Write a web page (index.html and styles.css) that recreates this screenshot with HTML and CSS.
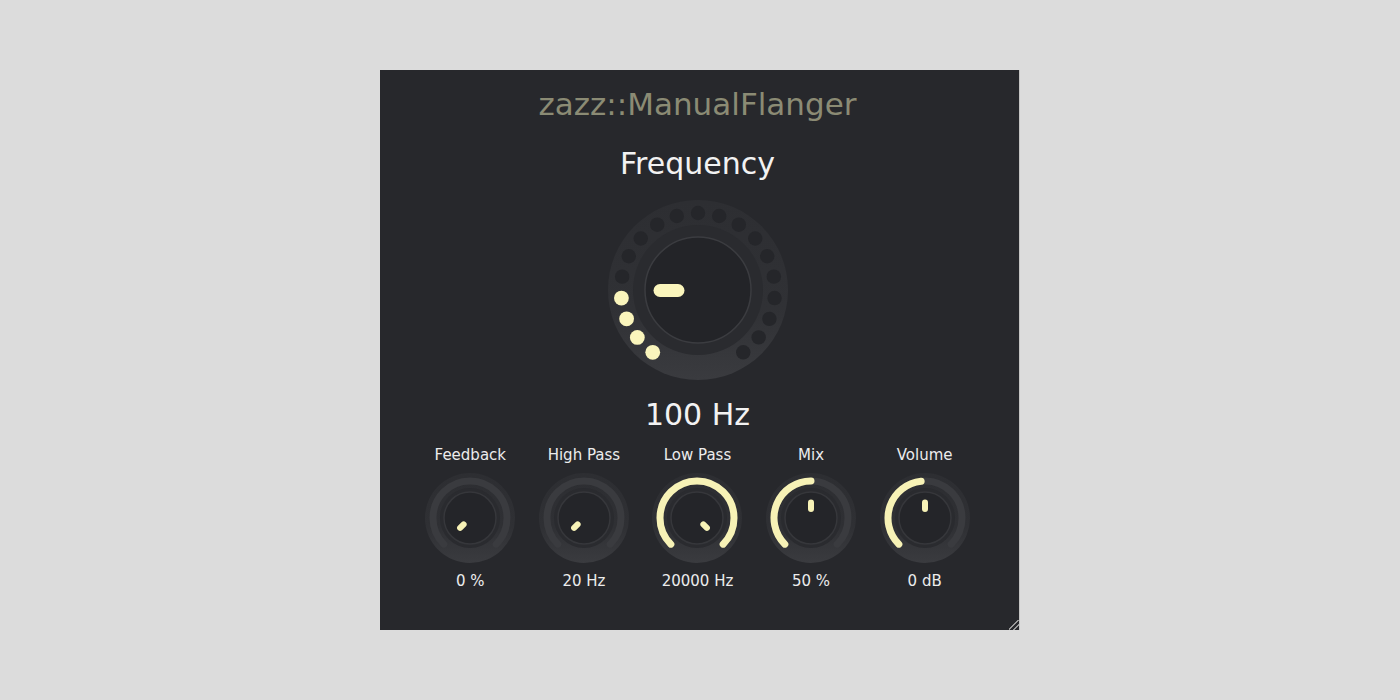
FILE: index.html
```html
<!DOCTYPE html>
<html>
<head>
<meta charset="utf-8">
<link rel="stylesheet" href="styles.css">
</head>
<body>
<svg class="defs" width="0" height="0">
  <defs>
    <linearGradient id="ringGrad" x1="0" y1="0" x2="0" y2="1">
      <stop offset="0" stop-color="#2d2e32"/>
      <stop offset="0.6" stop-color="#303135"/>
      <stop offset="1" stop-color="#3a3b3f"/>
    </linearGradient>
    <linearGradient id="baseGrad" x1="0" y1="0" x2="0" y2="1">
      <stop offset="0" stop-color="#2d2e32"/>
      <stop offset="0.6" stop-color="#2f3034"/>
      <stop offset="1" stop-color="#3a3b3f"/>
    </linearGradient>
  </defs>
</svg>
<div class="plugin">
  <div class="title">zazz::ManualFlanger</div>
  <div class="main-label">Frequency</div>
  <svg class="big-knob" width="180" height="180" viewBox="0 0 180 180">
    <circle cx="90" cy="90" r="90" fill="url(#ringGrad)"/>
    <g fill="#25262a">
      <circle cx="90" cy="13" r="7.2"/>
      <circle cx="111.22" cy="15.98" r="7.2"/>
      <circle cx="130.8" cy="24.7" r="7.2"/>
      <circle cx="147.22" cy="38.48" r="7.2"/>
      <circle cx="159.21" cy="56.24" r="7.2"/>
      <circle cx="165.83" cy="76.63" r="7.2"/>
      <circle cx="166.58" cy="98.05" r="7.2"/>
      <circle cx="161.39" cy="118.84" r="7.2"/>
      <circle cx="150.68" cy="137.41" r="7.2"/>
      <circle cx="135.26" cy="152.29" r="7.2"/>
      <circle cx="68.78" cy="15.98" r="7.2"/>
      <circle cx="49.2" cy="24.7" r="7.2"/>
      <circle cx="32.78" cy="38.48" r="7.2"/>
      <circle cx="20.79" cy="56.24" r="7.2"/>
      <circle cx="14.17" cy="76.63" r="7.2"/>
    </g>
    <g fill="#faf5bc">
      <circle cx="13.42" cy="98.05" r="7.4"/>
      <circle cx="18.61" cy="118.84" r="7.4"/>
      <circle cx="29.32" cy="137.41" r="7.4"/>
      <circle cx="44.74" cy="152.29" r="7.4"/>
    </g>
    <circle cx="90" cy="90" r="65" fill="#2a2b2f"/>
    <circle cx="90" cy="90" r="53" fill="#232428" stroke="#3b3c40" stroke-width="1.5"/>
    <line x1="52" y1="90.5" x2="70" y2="90.5" stroke="#faf5bc" stroke-width="13" stroke-linecap="round"/>
  </svg>
  <div class="main-value">100 Hz</div>

  <div class="knob-row">
    <div class="knob">
      <div class="k-label">Feedback</div>
      <svg width="90" height="90" viewBox="0 0 90 90">
        <circle cx="45" cy="45" r="45" class="k-base"/>
        <path class="k-track" d="M18.84 71.16 A37 37 0 1 1 71.16 71.16"/>
        <circle cx="45" cy="45" r="30" class="k-well"/>
        <circle cx="45" cy="45" r="26" class="k-cap"/>
        <line class="k-ind" x1="38.64" y1="51.36" x2="35.1" y2="54.9"/>
      </svg>
      <div class="k-value">0 %</div>
    </div>
    <div class="knob">
      <div class="k-label">High Pass</div>
      <svg width="90" height="90" viewBox="0 0 90 90">
        <circle cx="45" cy="45" r="45" class="k-base"/>
        <path class="k-track" d="M18.84 71.16 A37 37 0 1 1 71.16 71.16"/>
        <circle cx="45" cy="45" r="30" class="k-well"/>
        <circle cx="45" cy="45" r="26" class="k-cap"/>
        <line class="k-ind" x1="38.64" y1="51.36" x2="35.1" y2="54.9"/>
      </svg>
      <div class="k-value">20 Hz</div>
    </div>
    <div class="knob">
      <div class="k-label">Low Pass</div>
      <svg width="90" height="90" viewBox="0 0 90 90">
        <circle cx="45" cy="45" r="45" class="k-base"/>
        <path class="k-track" d="M18.84 71.16 A37 37 0 1 1 71.16 71.16"/>
        <path class="k-arc" d="M18.84 71.16 A37 37 0 1 1 71.16 71.16"/>
        <circle cx="45" cy="45" r="30" class="k-well"/>
        <circle cx="45" cy="45" r="26" class="k-cap"/>
        <line class="k-ind" x1="51.36" y1="51.36" x2="54.9" y2="54.9"/>
      </svg>
      <div class="k-value">20000 Hz</div>
    </div>
    <div class="knob">
      <div class="k-label">Mix</div>
      <svg width="90" height="90" viewBox="0 0 90 90">
        <circle cx="45" cy="45" r="45" class="k-base"/>
        <path class="k-track" d="M18.84 71.16 A37 37 0 1 1 71.16 71.16"/>
        <path class="k-arc" d="M18.84 71.16 A37 37 0 0 1 45 8"/>
        <circle cx="45" cy="45" r="30" class="k-well"/>
        <circle cx="45" cy="45" r="26" class="k-cap"/>
        <line class="k-ind" x1="45" y1="36" x2="45" y2="29.5"/>
      </svg>
      <div class="k-value">50 %</div>
    </div>
    <div class="knob">
      <div class="k-label">Volume</div>
      <svg width="90" height="90" viewBox="0 0 90 90">
        <circle cx="45" cy="45" r="45" class="k-base"/>
        <path class="k-track" d="M18.84 71.16 A37 37 0 1 1 71.16 71.16"/>
        <path class="k-arc" d="M18.84 71.16 A37 37 0 0 1 41.13 8.2"/>
        <circle cx="45" cy="45" r="30" class="k-well"/>
        <circle cx="45" cy="45" r="26" class="k-cap"/>
        <line class="k-ind" x1="45" y1="36" x2="45" y2="29.5"/>
      </svg>
      <div class="k-value">0 dB</div>
    </div>
  </div>
  <div class="grip"></div>
</div>
</body>
</html>
```

FILE: styles.css
```css
html, body {
  margin: 0;
  padding: 0;
}
body {
  background: #dcdcdc;
  font-family: "DejaVu Sans", Verdana, sans-serif;
}
.defs {
  position: absolute;
  width: 0;
  height: 0;
}
.plugin {
  position: relative;
  width: 640px;
  height: 560px;
  margin: 70px 0 0 380px;
  padding-right: 4px;
  background: #27282c;
  border-right: 1px solid #c4c4c4;
  box-sizing: border-box;
  display: flex;
  flex-direction: column;
  align-items: center;
}
.title {
  margin-top: 14px;
  font-size: 31px;
  line-height: 40px;
  color: #8b8b74;
}
.main-label {
  margin-top: 20px;
  font-size: 30px;
  line-height: 40px;
  color: #f2f2f2;
}
.big-knob {
  margin-top: 16px;
  display: block;
}
.main-value {
  margin-top: 15px;
  font-size: 30px;
  line-height: 40px;
  color: #f2f2f2;
}
.knob-row {
  margin-top: 10px;
  display: flex;
  width: 568px;
  justify-content: space-between;
}
.knob {
  width: 113.6px;
  display: flex;
  flex-direction: column;
  align-items: center;
}
.k-label {
  font-size: 15px;
  line-height: 20px;
  color: #ececec;
}
.knob svg {
  display: block;
  margin-top: 8px;
}
.k-value {
  margin-top: 8px;
  font-size: 15px;
  line-height: 20px;
  color: #ececec;
}
.k-base { fill: url(#baseGrad); }
.k-track {
  fill: none;
  stroke: #3a3b3f;
  stroke-width: 7;
  stroke-linecap: round;
}
.k-arc {
  fill: none;
  stroke: #f7f2b6;
  stroke-width: 7;
  stroke-linecap: round;
}
.k-well { fill: #2a2b2f; }
.k-cap {
  fill: #242529;
  stroke: #36373b;
  stroke-width: 1.5;
}
.k-ind {
  stroke: #f7f2b6;
  stroke-width: 6;
  stroke-linecap: round;
}
.grip {
  position: absolute;
  right: 0;
  bottom: 0;
  width: 10px;
  height: 10px;
  background: linear-gradient(135deg, transparent 45%, #9a9a9a 45%, #9a9a9a 55%, transparent 55%, transparent 70%, #9a9a9a 70%, #9a9a9a 80%, transparent 80%);
}
```
